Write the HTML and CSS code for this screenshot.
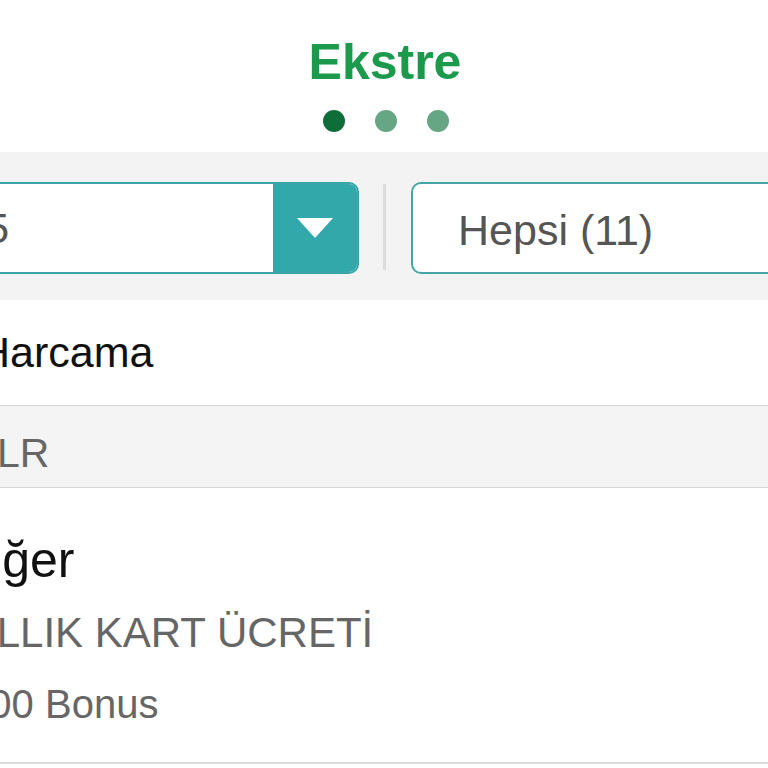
FILE: index.html
```html
<!DOCTYPE html>
<html lang="tr">
<head>
<meta charset="utf-8">
<title>Ekstre</title>
<link rel="stylesheet" href="styles.css">
</head>
<body>
<div class="page">
  <header class="header">
    <h1 class="title">Ekstre</h1>
    <div class="dots">
      <span class="dot dot-active"></span>
      <span class="dot"></span>
      <span class="dot"></span>
    </div>
  </header>

  <section class="filters">
    <div class="select">
      <span class="select-text">Ekim 2015</span>
      <span class="select-btn"><span class="caret"></span></span>
    </div>
    <span class="sep"></span>
    <div class="field">
      <span class="field-text">Hepsi (11)</span>
    </div>
  </section>

  <div class="row-main"><span class="main-text">Harcama</span></div>
  <div class="row-section"><span class="section-text">LR</span></div>

  <div class="item">
    <div class="item-title"><span class="t-off">Diğer</span></div>
    <div class="item-sub"><span class="s-off">YILLIK KART ÜCRETİ</span></div>
    <div class="item-bonus"><span class="b-off">0,00 Bonus</span></div>
  </div>
</div>
</body>
</html>
```

FILE: styles.css
```css
html, body {
  margin: 0;
  padding: 0;
  background: #ffffff;
}
body {
  width: 768px;
  height: 768px;
  overflow: hidden;
  font-family: "Liberation Sans", Arial, Helvetica, sans-serif;
}
.page {
  width: 768px;
  overflow: hidden;
}
.header {
  padding-top: 32px;
  padding-bottom: 20px;
  display: flex;
  flex-direction: column;
  align-items: center;
}
.title {
  margin: 0;
  font-size: 50px;
  line-height: 60px;
  font-weight: bold;
  color: #1b9a4c;
  padding-left: 2px;
}
.dots {
  margin-top: 18px;
  display: flex;
  gap: 30px;
  padding-left: 4px;
}
.dot {
  width: 22px;
  height: 22px;
  border-radius: 50%;
  background: #67a684;
}
.dot-active {
  background: #0f6d3a;
}

.filters {
  background: #f3f3f3;
  height: 148px;
  box-sizing: border-box;
  padding-top: 30px;
  display: flex;
  align-items: flex-start;
}
.select {
  margin-left: -200px;
  width: 559px;
  height: 92px;
  box-sizing: border-box;
  border: 2px solid #3aa6a8;
  border-radius: 10px;
  background: #ffffff;
  overflow: hidden;
  display: flex;
  align-items: center;
  flex-shrink: 0;
}
.select-text {
  flex: 1;
  padding-left: 4px;
  font-size: 43px;
  color: #555555;
  white-space: nowrap;
}
.select-btn {
  width: 84px;
  height: 100%;
  background: #33a8ab;
  display: flex;
  align-items: center;
  justify-content: center;
}
.caret {
  width: 0;
  height: 0;
  border-left: 18px solid transparent;
  border-right: 18px solid transparent;
  border-top: 20px solid #ffffff;
}
.sep {
  width: 3px;
  height: 86px;
  margin: 2px 24px 0 24px;
  background: #dcdcdc;
  flex-shrink: 0;
}
.field {
  width: 500px;
  height: 92px;
  box-sizing: border-box;
  border: 2px solid #46a5a5;
  border-radius: 10px;
  background: #ffffff;
  display: flex;
  align-items: center;
  padding-left: 45px;
  flex-shrink: 0;
  margin-left: 1px;
}
.field-text {
  font-size: 43px;
  color: #555555;
  white-space: nowrap;
  padding-top: 4px;
}

.row-main {
  height: 105px;
  font-size: 43px;
  line-height: 105px;
  border-bottom: 1px solid #d6d6d6;
  white-space: nowrap;
  color: #111111;
}
.main-text {
  display: inline-block;
  margin-left: -21px;
}
.row-section {
  background: #f4f4f4;
  padding-top: 23px;
  padding-bottom: 10px;
  font-size: 41px;
  line-height: 48px;
  border-bottom: 1px solid #d6d6d6;
  white-space: nowrap;
  color: #666666;
}
.section-text {
  display: inline-block;
  margin-left: -3px;
}

.item {
  padding-top: 44px;
  padding-bottom: 33px;
  border-bottom: 2px solid #dadada;
  white-space: nowrap;
}
.item-title {
  font-size: 50px;
  line-height: 57px;
  color: #111111;
}
.t-off {
  display: inline-block;
  margin-left: -45px;
}
.item-sub {
  margin-top: 19px;
  font-size: 42px;
  line-height: 50px;
  color: #666666;
}
.s-off {
  display: inline-block;
  margin-left: -43px;
}
.item-bonus {
  margin-top: 21px;
  font-size: 40px;
  line-height: 50px;
  color: #666666;
}
.b-off {
  display: inline-block;
  margin-left: -44px;
}
```
